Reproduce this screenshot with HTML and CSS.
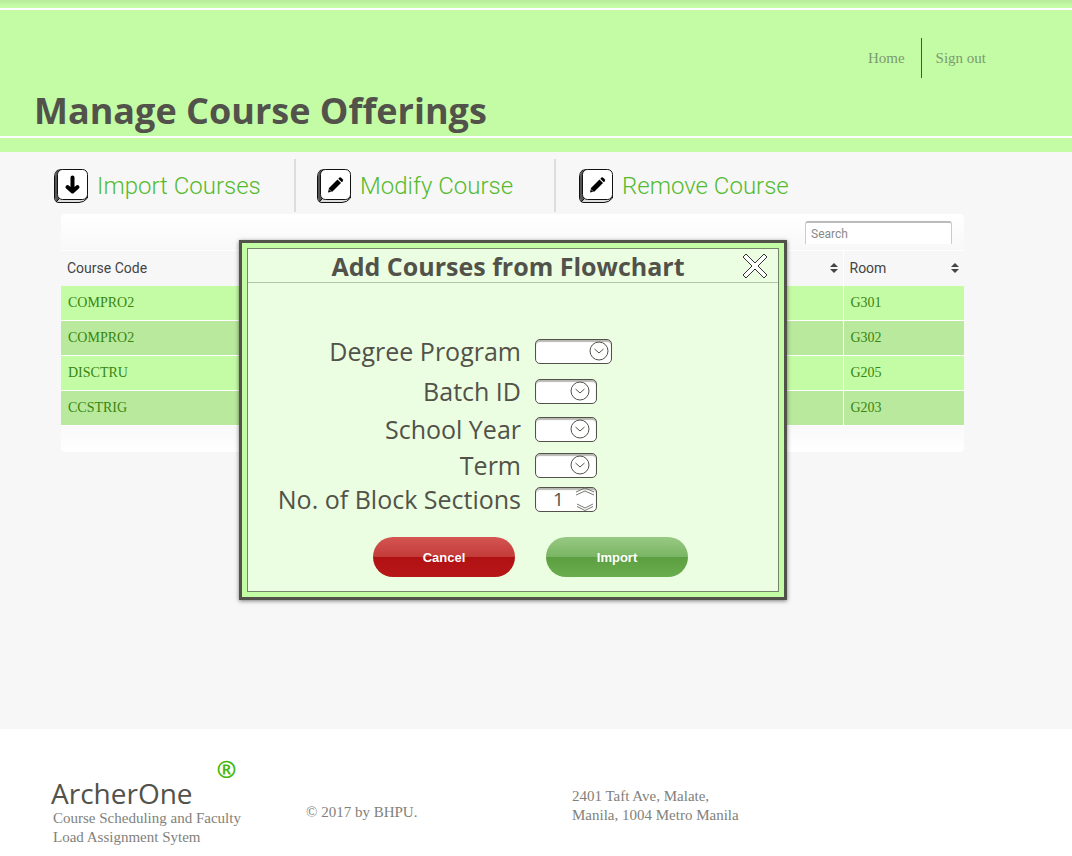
FILE: index.html
```html
<!DOCTYPE html>
<html lang="en">
<head>
<meta charset="utf-8">
<meta name="viewport" content="width=device-width, initial-scale=1">
<title>Manage Course Offerings</title>
<link rel="stylesheet" href="styles.css">
</head>
<body>
<svg class="defs" aria-hidden="true">
  <symbol id="key" viewBox="0 0 36 36">
    <path d="M8 1.5 L4 2.5 Q1.500 5 1.500 9 V29 Q1.500 34.500 6 34.500 H26 Q31 34.500 34.500 30 V8 Z" fill="#ddd" stroke="#111"/>
    <path d="M7 2 L4 3 Q2 5 2 9 V30 Q2 33 3.500 34 L6.500 31 Q4.500 29 4.500 27 V7 Q4.500 4 7 2 Z" fill="#555"/>
    <path d="M3 34 L6 31" stroke="#111" fill="none"/>
    <rect x="4.500" y="1.500" width="30" height="30" rx="5" fill="#fff" stroke="#111"/>
  </symbol>
  <symbol id="pencil" viewBox="0 0 36 36">
    <use href="#key"/>
    <path d="M13 20 L21.500 11.500 L25 15 L16.500 23.500 L12 24.500 Z"/>
    <path d="M22.300 10.700 L23.500 9.500 Q24.500 9 25.500 10 L26.700 11.300 Q27.500 12.300 26.800 13.200 L25.800 14.200 Z"/>
    <path d="M12.800 21.200 L15.400 23.800" stroke="#fff" stroke-width=".6"/>
  </symbol>
  <symbol id="down" viewBox="0 0 20 20">
    <circle cx="10" cy="10" r="9" fill="#fff" stroke="#52524a"/>
    <path d="M5.500 8 L10 12 L14.500 8" fill="none" stroke="#52524a"/>
  </symbol>
  <symbol id="sort" viewBox="0 0 10 10">
    <path d="M1 4 L5 0 L9 4 Z M1 6 L5 10 L9 6 Z" fill="#444"/>
  </symbol>
</svg>

<header class="header">
  <h1 class="header-title">Manage Course Offerings</h1>
  <nav class="nav">
    <a class="nav-link" href="#home">Home</a>
    <a class="nav-link" href="#signout">Sign out</a>
  </nav>
</header>

<main class="main">
  <div class="toolbar">
    <a class="tool tool-import" href="#import">
      <svg class="tool-icon" viewBox="0 0 36 36" aria-hidden="true"><use href="#key"/><path d="M19.500 9.500 V22 M14.500 19 L19.500 23.500 L24.500 19" fill="none" stroke="#000" stroke-width="4" stroke-linecap="round" stroke-linejoin="round"/></svg>
      Import Courses
    </a>
    <a class="tool tool-modify" href="#modify">
      <svg class="tool-icon" viewBox="0 0 36 36" aria-hidden="true"><use href="#pencil"/></svg>
      Modify Course
    </a>
    <a class="tool tool-remove" href="#remove">
      <svg class="tool-icon" viewBox="0 0 36 36" aria-hidden="true"><use href="#pencil"/></svg>
      Remove Course
    </a>
  </div>

  <section class="panel">
    <div class="panel-top">
      <input class="search" type="search" placeholder="Search" aria-label="Search">
    </div>
    <table class="courses">
      <colgroup><col class="col-code"><col><col class="col-room"></colgroup>
      <thead>
        <tr>
          <th>Course Code</th>
          <th><div class="head"><span></span><svg class="sort" aria-hidden="true"><use href="#sort"/></svg></div></th>
          <th><div class="head"><span>Room</span><svg class="sort" aria-hidden="true"><use href="#sort"/></svg></div></th>
        </tr>
      </thead>
      <tbody>
        <tr><td>COMPRO2</td><td></td><td>G301</td></tr>
        <tr><td>COMPRO2</td><td></td><td>G302</td></tr>
        <tr><td>DISCTRU</td><td></td><td>G205</td></tr>
        <tr><td>CCSTRIG</td><td></td><td>G203</td></tr>
      </tbody>
    </table>
    <div class="panel-bottom"></div>
  </section>

  <div class="dialog" role="dialog" aria-labelledby="dialog-title">
    <div class="dialog-body">
      <div class="dialog-head">
        <h2 class="dialog-title" id="dialog-title">Add Courses from Flowchart</h2>
        <button class="close" type="button" aria-label="Close">
          <svg class="close-icon" viewBox="0 0 26 26" aria-hidden="true"><path d="M4 1 L13 10 L22 1 L25 4 L16 13 L25 22 L22 25 L13 16 L4 25 L1 22 L10 13 L1 4 Z" fill="#fff" stroke="#333"/></svg>
        </button>
      </div>
      <form class="form">
        <div class="fields">
          <label for="program">Degree Program</label>
          <div class="control control-wide"><select class="box" id="program"></select><svg class="chevron" aria-hidden="true"><use href="#down"/></svg></div>
          <label for="batch">Batch ID</label>
          <div class="control"><select class="box" id="batch"></select><svg class="chevron" aria-hidden="true"><use href="#down"/></svg></div>
          <label for="year">School Year</label>
          <div class="control"><select class="box" id="year"></select><svg class="chevron" aria-hidden="true"><use href="#down"/></svg></div>
          <label for="term">Term</label>
          <div class="control"><select class="box" id="term"></select><svg class="chevron" aria-hidden="true"><use href="#down"/></svg></div>
          <label for="sections">No. of Block Sections</label>
          <div class="control control-number"><input class="box" id="sections" type="number" value="1"><svg class="stepper" viewBox="0 0 18 24" aria-hidden="true"><path d="M0 5 L9 1 L18 5 M0 8 L9 4 L18 8 M1 17 L9 21 L17 17 M1 19.500 L9 23.500 L17 19.500" fill="none" stroke="#77776f"/></svg></div>
        </div>
        <div class="actions">
          <button class="button button-cancel" type="button">Cancel</button>
          <button class="button button-import" type="button">Import</button>
        </div>
      </form>
    </div>
  </div>
</main>

<footer class="footer">
  <div class="brand">
    <div class="brand-name">ArcherOne<span class="brand-mark">®</span></div>
    <p class="brand-text">Course Scheduling and Faculty<br>Load Assignment Sytem</p>
  </div>
  <p class="copyright">© 2017 by BHPU.</p>
  <address class="address">2401 Taft Ave, Malate,<br>Manila, 1004 Metro Manila</address>
</footer>
</body>
</html>
```

FILE: styles.css
```css
* { box-sizing: border-box; }

body {
  display: flex;
  flex-direction: column;
  min-height: 100vh;
  margin: 0;
  background: #f7f7f7;
  color: #52524a;
  font-family: "Liberation Serif", serif;
  font-size: 15px;
}

h1, h2, p { margin: 0; }
a { text-decoration: none; }

.defs { display: none; }

.header {
  display: flex;
  justify-content: space-between;
  align-items: flex-start;
  min-height: 152px;
  padding: 38px 72px 16px 34px;
  background:
    linear-gradient(#fff, #fff) 0 8px / 100% 2px no-repeat,
    linear-gradient(#fff, #fff) 0 136px / 100% 2px no-repeat,
    linear-gradient(#b6ea98, #c4fca6 6px);
}

.header-title {
  align-self: flex-end;
  font: bold 36px/50px "Open Sans", sans-serif;
}

.nav { display: flex; }

.nav-link {
  padding: 0 14px;
  color: #7b9a6d;
  line-height: 40px;
}

.nav-link:first-child {
  padding-right: 16px;
  border-right: 1px solid #44583a;
}

.main {
  position: relative;
  flex: 1;
  padding-bottom: 48px;
}

.toolbar {
  display: flex;
  height: 62px;
  padding: 7px 0 2px 53px;
}

.tool {
  display: flex;
  align-items: center;
  gap: 8px;
  color: #55bb2e;
  font: 300 24px/28px Roboto, sans-serif;
  white-space: nowrap;
}

.tool-icon { width: 36px; height: 36px; }

.tool-import { width: 243px; border-right: 2px solid #ddd; }
.tool-modify { width: 260px; padding-left: 20px; border-right: 2px solid #ddd; }
.tool-remove { padding-left: 22px; }

.panel { margin: 0 108px 0 61px; }

.panel-top {
  display: flex;
  justify-content: flex-end;
  height: 36px;
  padding: 7px 12px;
  border-radius: 4px 4px 0 0;
  background: linear-gradient(#fff, #f8f8f8);
}

.search {
  width: 147px;
  height: 23px;
  padding: 0 5px;
  border: 1px solid #ccc;
  border-top: 2px solid #bbb;
  border-bottom: 0;
  border-radius: 3px 3px 0 0;
  background: #fff;
  font: 12px Roboto, sans-serif;
  appearance: none;
}

.search::placeholder { color: #8a8a8a; }

.courses {
  width: 100%;
  border-collapse: collapse;
  table-layout: fixed;
}

.col-code { width: 200px; }
.col-room { width: 121px; }

.courses th, .courses td {
  height: 35px;
  padding: 0 7px;
  text-align: left;
}

.courses th {
  padding: 0 4px 0 6px;
  border-top: 1px solid #fff;
  color: #444;
  font: 14px/20px Roboto, sans-serif;
}

.courses td {
  border-bottom: 1px solid #fff;
  background: #c4fca6;
  color: #38850f;
  font-size: 14px;
}

.courses tr:nth-child(even) td { background: #b8e99c; }

.courses th:last-child, .courses td:last-child { border-left: 1px solid #fff; }

.head {
  display: flex;
  justify-content: space-between;
  align-items: center;
}

.sort { width: 10px; height: 10px; }

.panel-bottom {
  height: 26px;
  border-radius: 0 0 4px 4px;
  background: linear-gradient(#f9f9f9, #fff);
}

.dialog {
  position: absolute;
  top: 88px;
  left: 239px;
  width: 548px;
  padding: 5px;
  border: 3px solid #52524a;
  background: #c4fca6;
  box-shadow: 0 1px 4px rgba(0, 0, 0, .5);
}

.dialog-body {
  border: 1px solid #77836c;
  background: #ebfee1;
}

.dialog-head {
  display: grid;
  grid-template-columns: 26px 1fr 36px;
  align-items: center;
  height: 34px;
  border-bottom: 1px solid #b3c6a6;
}

.dialog-title {
  grid-column: 2;
  font: bold 25px/34px "Open Sans", sans-serif;
  text-align: center;
  white-space: nowrap;
}

.close {
  width: 26px;
  height: 26px;
  padding: 0;
  border: 0;
  background: none;
}

.close-icon { display: block; width: 26px; height: 26px; }

.form { padding: 48px 16px 14px; }

.fields {
  display: grid;
  grid-template-columns: 257px 1fr;
  grid-template-rows: 40px 40px 36px 36px 32px;
  column-gap: 14px;
  align-items: center;
  font: 25px/32px "Open Sans", sans-serif;
  text-align: right;
}

.control {
  display: grid;
  grid-template-columns: 1fr 20px 7px;
  align-items: center;
  width: 62px;
}

.control-wide {
  grid-template-columns: 1fr 20px 3px;
  width: 77px;
}

.control-number { grid-template-columns: 1fr 18px 3px; }

.box {
  grid-area: 1 / 1 / 2 / 4;
  width: 100%;
  height: 25px;
  padding: 0 10px;
  border: 1px solid #52524a;
  border-radius: 5px;
  background: #fff;
  box-shadow: inset 0 2px 1px #b9b9b4;
  color: #52524a;
  font: 19px "Open Sans", sans-serif;
  appearance: none;
}

.control-number .box {
  padding: 0 0 0 17px;
  appearance: textfield;
}

.chevron, .stepper {
  grid-area: 1 / 2;
  width: 20px;
  height: 20px;
  pointer-events: none;
}

.stepper { width: 18px; height: 24px; }

.actions {
  display: flex;
  justify-content: center;
  gap: 31px;
  margin-top: 22px;
  padding-left: 35px;
}

.button {
  width: 142px;
  height: 40px;
  border: 0;
  border-radius: 20px;
  color: #fff;
  font: bold 13px "Liberation Sans", sans-serif;
}

.button-cancel { background: linear-gradient(#d45552, #c33b39 50%, #b01112 50%, #b81718); }
.button-import { background: linear-gradient(#97c983, #7ab563 50%, #5c9f41 50%, #68ad4e); }

.footer {
  display: grid;
  grid-template-columns: 255px 266px 1fr;
  min-height: 127px;
  padding: 29px 20px 9px 51px;
  background: #fff;
  color: #81817a;
  line-height: 19px;
}

.brand-name {
  display: flex;
  align-items: flex-start;
  gap: 24px;
  height: 51px;
  color: #52524a;
  font: 28px/70px "Open Sans", sans-serif;
}

.brand-mark {
  color: #43b70b;
  font-size: 24px;
  font-weight: bold;
  line-height: 22px;
}

.brand-text { padding-left: 2px; }
.copyright { padding-top: 45px; }
.address { padding-top: 29px; font-style: normal; }
```
